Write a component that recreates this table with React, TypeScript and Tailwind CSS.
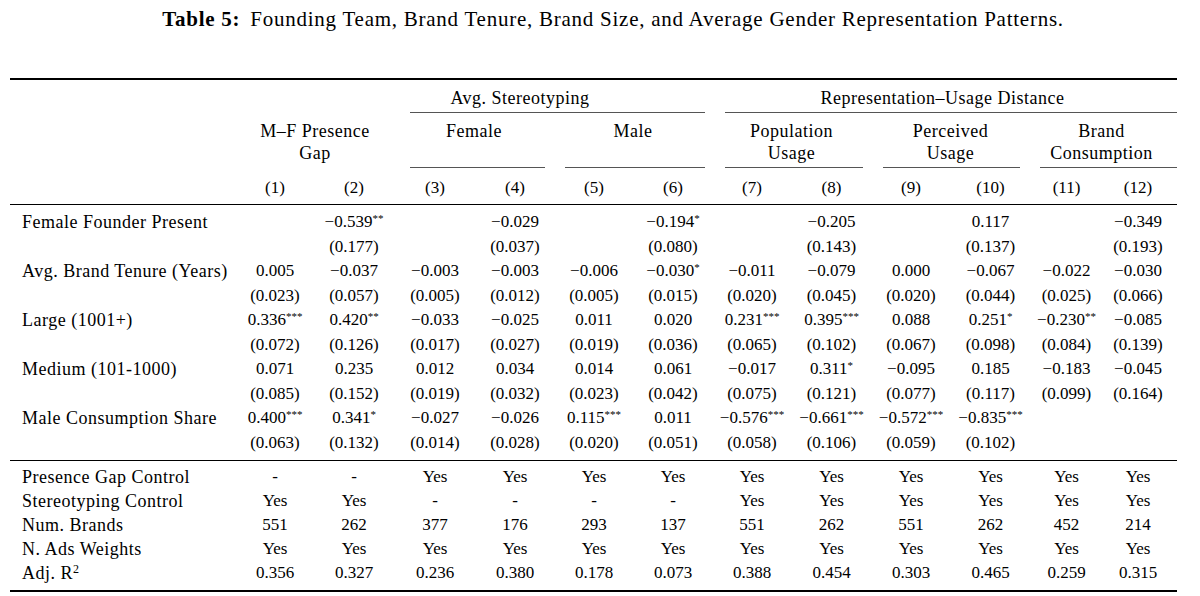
import React from "react";

const GRID =
  "grid grid-cols-[226px_78px_80px_82px_78px_80px_78px_80px_79px_80px_79px_73px_70px]";

type Row = { label: string; coef: string[]; se: string[] };

const rows: Row[] = [
  {
    label: "Female Founder Present",
    coef: ["", "−0.539**", "", "−0.029", "", "−0.194*", "", "−0.205", "", "0.117", "", "−0.349"],
    se: ["", "(0.177)", "", "(0.037)", "", "(0.080)", "", "(0.143)", "", "(0.137)", "", "(0.193)"],
  },
  {
    label: "Avg. Brand Tenure (Years)",
    coef: ["0.005", "−0.037", "−0.003", "−0.003", "−0.006", "−0.030*", "−0.011", "−0.079", "0.000", "−0.067", "−0.022", "−0.030"],
    se: ["(0.023)", "(0.057)", "(0.005)", "(0.012)", "(0.005)", "(0.015)", "(0.020)", "(0.045)", "(0.020)", "(0.044)", "(0.025)", "(0.066)"],
  },
  {
    label: "Large (1001+)",
    coef: ["0.336***", "0.420**", "−0.033", "−0.025", "0.011", "0.020", "0.231***", "0.395***", "0.088", "0.251*", "−0.230**", "−0.085"],
    se: ["(0.072)", "(0.126)", "(0.017)", "(0.027)", "(0.019)", "(0.036)", "(0.065)", "(0.102)", "(0.067)", "(0.098)", "(0.084)", "(0.139)"],
  },
  {
    label: "Medium (101-1000)",
    coef: ["0.071", "0.235", "0.012", "0.034", "0.014", "0.061", "−0.017", "0.311*", "−0.095", "0.185", "−0.183", "−0.045"],
    se: ["(0.085)", "(0.152)", "(0.019)", "(0.032)", "(0.023)", "(0.042)", "(0.075)", "(0.121)", "(0.077)", "(0.117)", "(0.099)", "(0.164)"],
  },
  {
    label: "Male Consumption Share",
    coef: ["0.400***", "0.341*", "−0.027", "−0.026", "0.115***", "0.011", "−0.576***", "−0.661***", "−0.572***", "−0.835***", "", ""],
    se: ["(0.063)", "(0.132)", "(0.014)", "(0.028)", "(0.020)", "(0.051)", "(0.058)", "(0.106)", "(0.059)", "(0.102)", "", ""],
  },
];

const yes = "Yes";
const stats: { label: React.ReactNode; vals: string[] }[] = [
  { label: "Presence Gap Control", vals: ["-", "-", yes, yes, yes, yes, yes, yes, yes, yes, yes, yes] },
  { label: "Stereotyping Control", vals: [yes, yes, "-", "-", "-", "-", yes, yes, yes, yes, yes, yes] },
  { label: "Num. Brands", vals: ["551", "262", "377", "176", "293", "137", "551", "262", "551", "262", "452", "214"] },
  { label: "N. Ads Weights", vals: Array(12).fill(yes) },
  {
    label: (
      <>
        Adj. R<span className="relative -top-[6px] text-[12px]">2</span>
      </>
    ),
    vals: ["0.356", "0.327", "0.236", "0.380", "0.178", "0.073", "0.388", "0.454", "0.303", "0.465", "0.259", "0.315"],
  },
];

function Val({ v }: { v: string }) {
  const m = v.match(/^(.*?)(\*+)$/);
  if (!m) return <>{v}</>;
  return (
    <>
      {m[1]}
      <span className="relative -top-[5px] text-[11px]">{m[2]}</span>
    </>
  );
}

function Cells({ vals }: { vals: string[] }) {
  return (
    <>
      {vals.map((v, i) => (
        <div key={i} className="text-center whitespace-nowrap">
          <Val v={v} />
        </div>
      ))}
    </>
  );
}

function Rule({ ml, mr }: { ml: number; mr: number }) {
  return <div className="h-px bg-[#555]" style={{ marginLeft: ml, marginRight: mr }} />;
}

function Group({ lines, ml, mr, rule = true }: { lines: string[]; ml: number; mr: number; rule?: boolean }) {
  return (
    <div className="col-span-2 flex flex-col justify-between">
      <div className="pt-[7px] text-center text-[18px] leading-[22px] tracking-[0.5px]">
        {lines.map((l) => (
          <div key={l}>{l}</div>
        ))}
      </div>
      {rule ? <Rule ml={ml} mr={mr} /> : <div className="h-px" />}
    </div>
  );
}

export default function App() {
  return (
    <div className="h-[596px] w-[1200px] overflow-hidden bg-white font-['Liberation_Serif',serif] text-black">
      <div className="flex h-[40px] items-center justify-center pl-[26px] text-[21px] tracking-[0.75px]">
        <span className="font-bold">Table 5:</span>
        <span className="ml-[10px]">
          Founding Team, Brand Tenure, Brand Size, and Average Gender Representation Patterns.
        </span>
      </div>

      <div className="ml-[10px] mt-[38px] w-[1167px] text-[17px]">
        <div className="h-[2px] bg-black" />

        {/* column group headers */}
        <div className={`${GRID} h-[33px]`}>
          <div />
          <div className="col-span-2" />
          <div className="col-span-4 flex flex-col justify-between">
            <div className="pr-[66px] pt-[6px] text-center text-[18px] leading-[24px] tracking-[0.5px]">
              Avg. Stereotyping
            </div>
            <Rule ml={16} mr={7} />
          </div>
          <div className="col-span-6 flex flex-col justify-between">
            <div className="pt-[6px] text-center text-[18px] leading-[24px] tracking-[0.5px]">
              Representation–Usage Distance
            </div>
            <Rule ml={13} mr={-4} />
          </div>
        </div>

        <div className={`${GRID} h-[55px]`}>
          <div />
          <Group lines={["M–F Presence", "Gap"]} ml={0} mr={0} rule={false} />
          <Group lines={["Female"]} ml={16} mr={9} />
          <Group lines={["Male"]} ml={11} mr={7} />
          <Group lines={["Population", "Usage"]} ml={13} mr={8} />
          <Group lines={["Perceived", "Usage"]} ml={12} mr={10} />
          <Group lines={["Brand", "Consumption"]} ml={10} mr={-4} />
        </div>

        <div className={`${GRID} h-[36px] pt-[8px] leading-[24px]`}>
          <div />
          <Cells vals={Array.from({ length: 12 }, (_, i) => `(${i + 1})`)} />
        </div>

        <div className="h-px bg-black" />

        <div className="py-[5px] leading-[24px]">
          {rows.map((r) => (
            <React.Fragment key={r.label}>
              <div className={GRID}>
                <div className="whitespace-nowrap pl-[12px] text-[18px] tracking-[0.5px]">{r.label}</div>
                <Cells vals={r.coef} />
              </div>
              <div className={GRID}>
                <div />
                <Cells vals={r.se} />
              </div>
            </React.Fragment>
          ))}
        </div>

        <div className="h-px bg-black" />

        <div className="pb-[3px] pt-[4px] leading-[24px]">
          {stats.map((s, i) => (
            <div key={i} className={GRID}>
              <div className="whitespace-nowrap pl-[12px] text-[18px] tracking-[0.5px]">{s.label}</div>
              <Cells vals={s.vals} />
            </div>
          ))}
        </div>

        <div className="h-[2px] bg-black" />

        <p className="mt-[5px] whitespace-nowrap pl-[12px] text-[15px] leading-[20px]">
          <span className="italic">Note:</span> All dependent variables are measured as percentages of people. The
          model controls for industry-level fixed effects and includes weights for the number of ads by each
          product category. The
        </p>
      </div>
    </div>
  );
}
